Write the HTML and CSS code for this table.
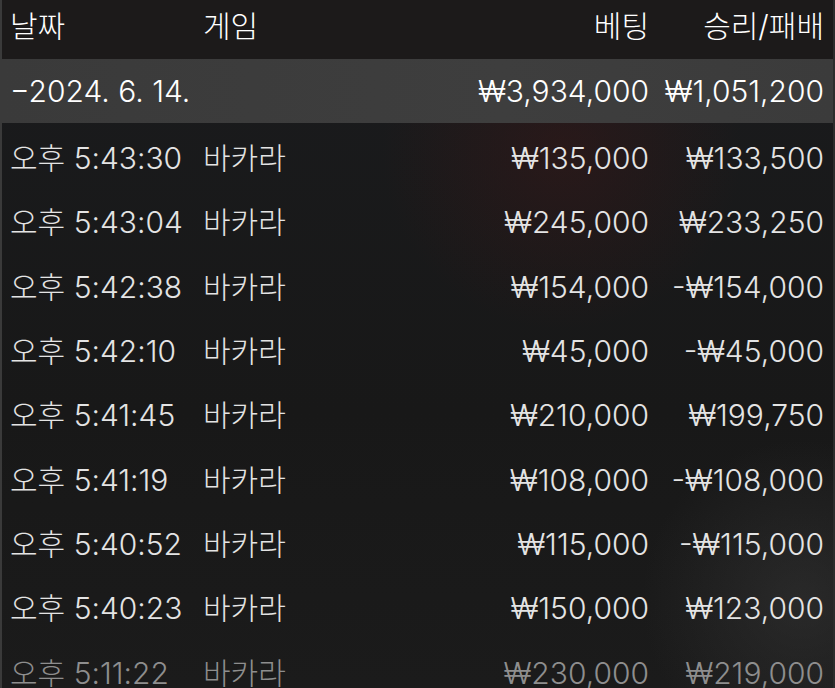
FILE: index.html
```html
<!DOCTYPE html>
<html lang="ko">
<head>
    <meta charset="utf-8">
    <title>베팅 내역</title>
    <link rel="stylesheet" href="styles.css">
</head>
<body>
    <div class="history">
        <div class="row head-row">
            <div class="cell">날짜</div>
            <div class="cell">게임</div>
            <div class="cell num">베팅</div>
            <div class="cell num">승리/패배</div>
        </div>

        <div class="row day-row">
            <div class="cell">−2024. 6. 14.</div>
            <div class="cell"></div>
            <div class="cell num">₩3,934,000</div>
            <div class="cell num">₩1,051,200</div>
        </div>

        <div class="rows">
            <div class="row"><div class="cell">오후 5:43:30</div><div class="cell">바카라</div><div class="cell num">₩135,000</div><div class="cell num">₩133,500</div></div>
            <div class="row"><div class="cell">오후 5:43:04</div><div class="cell">바카라</div><div class="cell num">₩245,000</div><div class="cell num">₩233,250</div></div>
            <div class="row"><div class="cell">오후 5:42:38</div><div class="cell">바카라</div><div class="cell num">₩154,000</div><div class="cell num">-₩154,000</div></div>
            <div class="row"><div class="cell">오후 5:42:10</div><div class="cell">바카라</div><div class="cell num">₩45,000</div><div class="cell num">-₩45,000</div></div>
            <div class="row"><div class="cell">오후 5:41:45</div><div class="cell">바카라</div><div class="cell num">₩210,000</div><div class="cell num">₩199,750</div></div>
            <div class="row"><div class="cell">오후 5:41:19</div><div class="cell">바카라</div><div class="cell num">₩108,000</div><div class="cell num">-₩108,000</div></div>
            <div class="row"><div class="cell">오후 5:40:52</div><div class="cell">바카라</div><div class="cell num">₩115,000</div><div class="cell num">-₩115,000</div></div>
            <div class="row"><div class="cell">오후 5:40:23</div><div class="cell">바카라</div><div class="cell num">₩150,000</div><div class="cell num">₩123,000</div></div>
            <div class="row faded"><div class="cell">오후 5:11:22</div><div class="cell">바카라</div><div class="cell num">₩230,000</div><div class="cell num">₩219,000</div></div>
        </div>
    </div>
</body>
</html>
```

FILE: styles.css
```css
body, html {
    height: 100%;
    margin: 0;
    overflow: hidden;
    background: #181818;
    font-family: Inter, "Noto Sans CJK KR", sans-serif;
    font-weight: 300;
    color: #e4e4e4;
}

.history {
    height: 100%;
    border-left: 2px solid #3a3a3a;
    border-right: 2px solid #2c2c2c;
    background:
        radial-gradient(circle at 560px 150px, rgba(70, 22, 22, 0.35), transparent 180px),
        radial-gradient(circle at 800px 600px, rgba(60, 60, 60, 0.45), transparent 160px),
        linear-gradient(180deg, #1a1b1d, #181818 60%, #1b1b1b);
}

.row {
    display: grid;
    grid-template-columns: 193px 1fr 200px 175px;
    align-items: center;
    height: 64px;
    padding: 0 9px 0 8px;
    font-size: 30px;
    line-height: 1;
    white-space: nowrap;
}

.cell.num {
    text-align: right;
}

.head-row {
    height: 59px;
    padding-bottom: 8px;
    box-sizing: border-box;
    color: #fff;
    background: #1c1a1a;
}

.day-row {
    color: #fff;
    background: linear-gradient(90deg, #3a3a3a, #3e3e3e 60%, #3b3b3b);
}

.rows .row {
    height: 64.3px;
    padding-top: 6px;
    box-sizing: border-box;
}

.faded {
    color: #8e8e8e;
}
```
